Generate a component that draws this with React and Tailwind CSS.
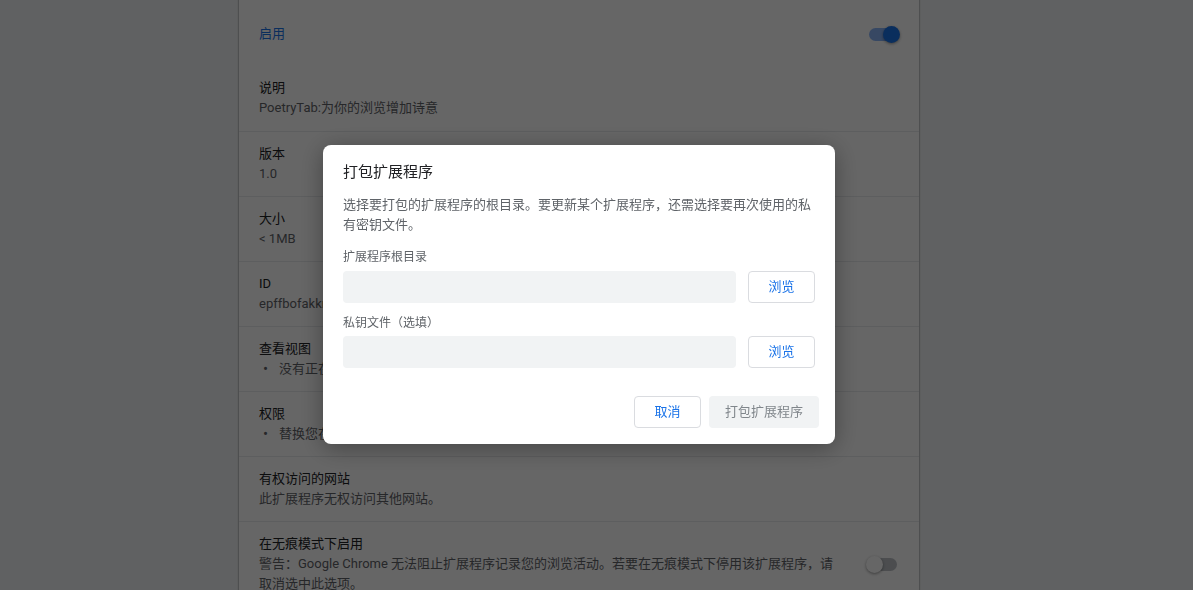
const font = { fontFamily: 'Roboto, "Noto Sans CJK SC", sans-serif' };

const Toggle = ({ on }) => (
  <div className="relative w-[31px] h-[17px]">
    <div
      className={`absolute top-[2px] w-[28px] h-[13px] rounded-full ${on ? 'left-0 bg-[#8ab4f8]' : 'right-0 bg-[#bdc1c6]'}`}
    ></div>
    <div
      className={`absolute top-0 w-[17px] h-[17px] rounded-full shadow-[0_1px_3px_rgba(0,0,0,0.4)] ${on ? 'right-0 bg-[#1a73e8]' : 'left-0 bg-white'}`}
    ></div>
  </div>
);

const Row = ({ title, children }) => (
  <div className="border-t border-[#e8eaed] px-5 py-3 h-[65px]">
    <div className="text-[13px] leading-5 text-[#202124]">{title}</div>
    <div className="text-[13px] leading-5 text-[#5f6368]">{children}</div>
  </div>
);

const Bullet = ({ children }) => (
  <div className="flex whitespace-nowrap">
    <span className="w-5 pl-[4px] text-[15px]">•</span>
    <span>{children}</span>
  </div>
);

const App = () => {
  return (
    <div className="h-screen overflow-hidden" style={font}>
      {/* 扩展程序详情页 */}
      <div className="h-full bg-[#f1f3f4] flex justify-center pr-[35px]">
        <div className="w-[680px] bg-white shadow-[0_0_1px_1px_rgba(60,64,67,0.25)]">
          <div className="h-[66px] pl-5 pr-[19px] pt-[2px] flex items-center justify-between">
            <span className="text-[13px] text-[#1a73e8]">启用</span>
            <Toggle on />
          </div>
          <div className="px-5 py-3 h-[65px]">
            <div className="text-[13px] leading-5 text-[#202124]">说明</div>
            <div className="text-[13px] leading-5 text-[#5f6368]">PoetryTab:为你的浏览增加诗意</div>
          </div>
          <Row title="版本">1.0</Row>
          <Row title="大小">&lt; 1MB</Row>
          <Row title="ID">epffbofakkmcbkhegfnfhmkjoiocnjgg</Row>
          <Row title="查看视图">
            <Bullet>没有正在活动的视图</Bullet>
          </Row>
          <Row title="权限">
            <Bullet>替换您在打开新标签页时看到的网页</Bullet>
          </Row>
          <Row title="有权访问的网站">此扩展程序无权访问其他网站。</Row>
          <div className="border-t border-[#e8eaed] pl-5 pr-[22px] pt-3 flex justify-between">
            <div className="w-[580px]">
              <div className="text-[13px] leading-5 text-[#202124]">在无痕模式下启用</div>
              <div className="text-[13px] leading-5 text-[#5f6368]">
                警告：Google Chrome 无法阻止扩展程序记录您的浏览活动。若要在无痕模式下停用该扩展程序，请取消选中此选项。
              </div>
            </div>
            <div className="mt-[22px]">
              <Toggle />
            </div>
          </div>
        </div>
      </div>

      {/* 遮罩 */}
      <div className="fixed inset-0 bg-black/60"></div>

      {/* 打包扩展程序对话框 */}
      <div className="fixed inset-0 flex items-center justify-center pr-[35px] pb-px">
        <div className="w-[512px] h-[299px] bg-white rounded-lg shadow-[0_4px_24px_rgba(0,0,0,0.35)] flex flex-col">
          <div className="px-5 pt-4 text-[15px] leading-[22px] text-[#202124]">打包扩展程序</div>
          <div className="px-5 mt-3 text-[13px] leading-5 text-[#5f6368]">
            选择要打包的扩展程序的根目录。要更新某个扩展程序，还需选择要再次使用的私有密钥文件。
          </div>
          <div className="px-5 mt-3 text-[12px] leading-5 text-[#5f6368]">扩展程序根目录</div>
          <div className="px-5 mt-1 flex gap-3">
            <div className="flex-1 h-8 rounded bg-[#f1f3f4]"></div>
            <button className="w-[67px] h-8 rounded border border-[#dadce0] text-[13px] text-[#1a73e8]">浏览</button>
          </div>
          <div className="px-5 mt-[10px] text-[12px] leading-5 text-[#5f6368]">私钥文件（选填）</div>
          <div className="px-5 mt-[3px] flex gap-3">
            <div className="flex-1 h-8 rounded bg-[#f1f3f4]"></div>
            <button className="w-[67px] h-8 rounded border border-[#dadce0] text-[13px] text-[#1a73e8]">浏览</button>
          </div>
          <div className="mt-auto p-4 flex justify-end gap-2">
            <button className="w-[67px] h-8 rounded border border-[#dadce0] text-[13px] text-[#1a73e8]">取消</button>
            <button className="w-[110px] h-8 rounded bg-[#f1f3f4] text-[13px] text-[#80868b]">打包扩展程序</button>
          </div>
        </div>
      </div>
    </div>
  );
};

export default App;
